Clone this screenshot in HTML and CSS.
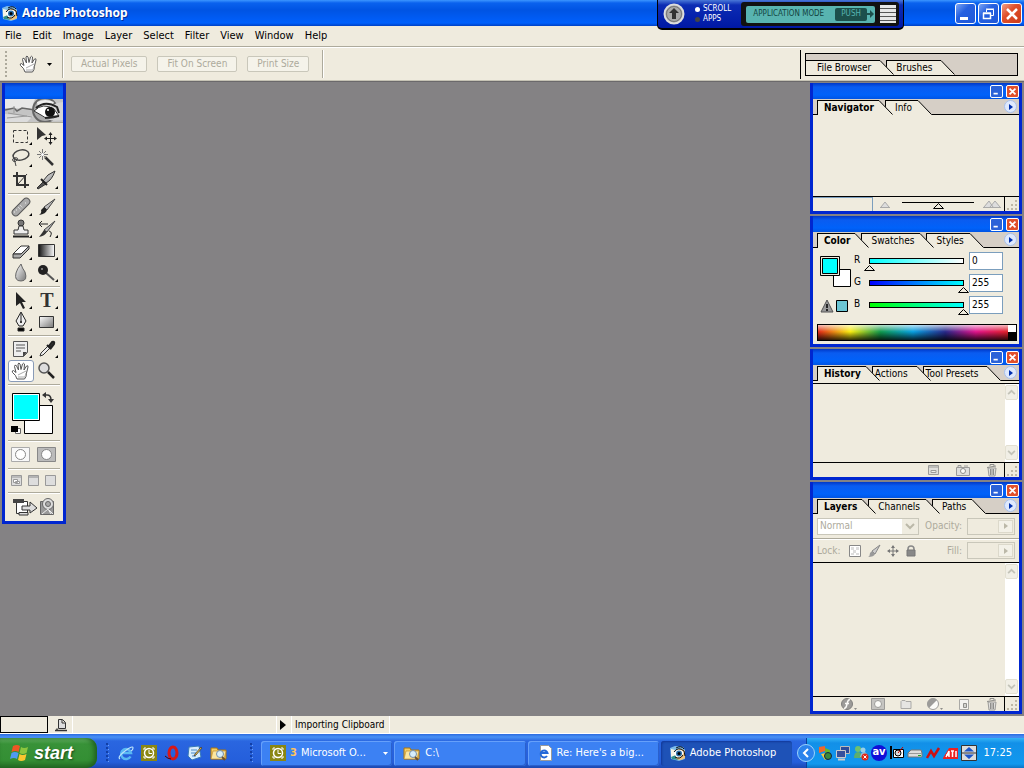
FILE: index.html
```html
<!DOCTYPE html>
<html lang="en">
<head>
    <meta charset="UTF-8">
    <meta name="viewport" content="width=device-width, initial-scale=1.0">
    <title>Adobe Photoshop</title>
    <link rel="stylesheet" href="styles.css">
</head>
<body>

<!-- shared icons -->
<svg class="defs" width="0" height="0" aria-hidden="true">
    <defs>
        <linearGradient id="metal" x1="0" y1="0" x2="1" y2="1">
            <stop offset="0" stop-color="#fff"/><stop offset="1" stop-color="#777"/>
        </linearGradient>
        <linearGradient id="dark" x1="0" y1="0" x2="1" y2="0">
            <stop offset="0" stop-color="#111"/><stop offset="1" stop-color="#fff"/>
        </linearGradient>
    </defs>
    <symbol id="i-slant" viewBox="0 0 14 15">
        <path class="slant-fill" d="M0 0L14 15H0z"/>
        <path d="M0 .5L13.500 14.500" fill="none" stroke="#000"/>
    </symbol>
    <symbol id="i-eye" viewBox="0 0 16 16">
        <path d="M0 3l5-2 8 1 2 3v9l-6 2-8-2z" fill="#7dbbe8"/>
        <path d="M1 4l4 1v9l-4-1z" fill="#f6f3e4"/>
        <path d="M1 12l5-2 3 5-7-1z" fill="#2f8f8a"/>
        <path d="M6 6q4-5 9 0v7q-6 4-9 0z" fill="#f0c47c"/>
        <path d="M4 8q4-6 10-1-3 7-8 5z" fill="#fff"/>
        <circle cx="9" cy="8.500" r="3" fill="#2a6ea8"/>
        <circle cx="9" cy="8.500" r="1.500" fill="#000"/>
        <path d="M4 7q4-6 10-1l1 5M5 12q5 3 8-2M6 3q5-3 8 1" fill="none" stroke="#111"/>
    </symbol>
    <symbol id="i-hand" viewBox="0 0 20 20">
        <path d="M6 18Q5 14 1.500 11.500q-1-2 1-2L5 11.500 3.500 5.500q0-2 1.800-1L7.500 9 7 3q.8-2 2 0l1 5.500L11.500 3q1.200-1.500 2 0L13 9l2.500-4q1.800-1 1.500 1l-1.500 6q0 4-2 6z" fill="#fff" stroke="#555"/>
        <path d="M7 16h7l1-4M7 14l8-4" stroke="#aaa" fill="none"/>
    </symbol>
    <symbol id="i-min" viewBox="0 0 13 13"><path d="M3 8h5v2H3z" fill="#fff"/></symbol>
    <symbol id="i-close" viewBox="0 0 13 13"><path d="M3 3l7 7M10 3l-7 7" stroke="#fff" stroke-width="2"/></symbol>
    <symbol id="i-up" viewBox="0 0 13 15"><path d="M2.500 9.500L6.500 5.500 10.500 9.500" fill="none" stroke="#c3c3b8" stroke-width="2"/></symbol>
    <symbol id="i-down" viewBox="0 0 13 15"><path d="M2.500 5.500L6.500 9.500 10.500 5.500" fill="none" stroke="#c3c3b8" stroke-width="2"/></symbol>
    <symbol id="i-trash" viewBox="0 0 14 14">
        <path d="M3 5l1 8h6l1-8z" fill="#ddd" stroke="#888"/>
        <path d="M2 4.500l9-1.500M5 3V1.500h4V3M5.500 6v6M7 6v6M8.500 6v6" fill="none" stroke="#777"/>
    </symbol>
    <symbol id="i-size" viewBox="0 0 14 14">
        <path d="M10 3h2v2h-2zM6 7h2v2H6zM10 7h2v2h-2zM2 11h2v2H2zM6 11h2v2H6zM10 11h2v2h-2z" fill="#bdb7a5"/>
    </symbol>
    <symbol id="i-folder" viewBox="0 0 18 16">
        <path d="M1 3h6l1 2h8v9H1z" fill="#f5ce62" stroke="#a87514"/>
        <path d="M3 6h13l-2 8H1z" fill="#fbe6a0" stroke="#b98427" stroke-width=".6"/>
        <circle cx="10" cy="9" r="3.500" fill="#d6eefb" stroke="#7890a8"/>
        <path d="M12 12l3 3" stroke="#6a5030" stroke-width="2"/>
    </symbol>
    <symbol id="i-outlook" viewBox="0 0 16 16">
        <path d="M0 0h16v16H0z" fill="#8a8612"/>
        <path d="M3 3h2M11 3h2M3 13h2M11 13h2M3 3v2M13 3v2M3 11v2M13 11v2" stroke="#fff"/>
        <circle cx="8" cy="8" r="4.500" fill="#8a8612" stroke="#fff" stroke-width="1.500"/>
        <path d="M8 5v3.500h3" fill="none" stroke="#fff"/>
    </symbol>
    <symbol id="i-ie" viewBox="0 0 16 16">
        <path d="M12.500 11.500A5 5 0 1 1 13 8H4" fill="none" stroke="#59b9f3" stroke-width="2.500"/>
        <path d="M2 14Q-1 12 7 6t8-3q0 2-2 3" fill="none" stroke="#b9e2fb" stroke-width="1.200"/>
    </symbol>
    <symbol id="i-grip" viewBox="0 0 6 22">
        <path d="M1 1h2v2H1zM1 5h2v2H1zM1 9h2v2H1zM1 13h2v2H1zM1 17h2v2H1z" fill="#123fa6"/>
        <path d="M3 3h1v1H3zM3 7h1v1H3zM3 11h1v1H3zM3 15h1v1H3zM3 19h1v1H3z" fill="#6fa1f5"/>
    </symbol>
</svg>

<header class="titlebar">
    <svg class="app-icon" width="16" height="16"><use href="#i-eye"/></svg>
    <h1>Adobe Photoshop</h1>
    <div class="window-buttons">
        <button aria-label="Minimize"><svg width="20" height="20"><path d="M4 13h8v3H4z" fill="#fff"/></svg></button>
        <button aria-label="Restore"><svg width="20" height="20"><path d="M7.500 8V5.500h7v6H12M7 5h8" fill="none" stroke="#fff"/><path d="M4.500 9.500h7v5h-7zM4 9h8" fill="none" stroke="#fff" stroke-width="1.500"/></svg></button>
        <button class="close" aria-label="Close"><svg width="20" height="20"><path d="M5 5l10 10M15 5L5 15" stroke="#fff" stroke-width="2.500"/></svg></button>
    </div>
    <div class="mode-widget">
        <button class="widget-up" aria-label="Up"><svg width="22" height="22"><circle cx="11" cy="11" r="9.500" fill="#999" stroke="#ddd" stroke-width="2"/><circle cx="11" cy="11" r="7.500" fill="#aaa" stroke="#777"/><path d="M11 5l5 5h-3v6H9v-6H6z" fill="#333"/></svg></button>
        <div class="widget-modes">
            <span class="mode on">SCROLL</span>
            <span class="mode">APPS</span>
        </div>
        <div class="widget-screen">
            <div class="lcd"><span>APPLICATION MODE</span><button>PUSH</button><svg width="7" height="8"><path d="M0 3h3V0l4 4-4 4V5H0z" fill="#1c504c"/></svg></div>
            <svg width="16" height="20"><path d="M0 1h16v18H0z" fill="#e6e6e6"/><path d="M0 4.500h16M0 8.500h16M0 12.500h16M0 16.500h16" stroke="#555"/></svg>
        </div>
    </div>
</header>

<nav class="menubar">
    <a href="#">File</a><a href="#">Edit</a><a href="#">Image</a><a href="#">Layer</a><a href="#">Select</a><a href="#">Filter</a><a href="#">View</a><a href="#">Window</a><a href="#">Help</a>
</nav>

<div class="options">
    <div class="grip"></div>
    <button class="tool-preset" aria-label="Hand tool">
        <svg width="20" height="20"><use href="#i-hand"/></svg>
        <svg width="5" height="3"><path d="M0 0h5L2.500 3z"/></svg>
    </button>
    <div class="rule"></div>
    <div class="option-buttons">
        <button disabled>Actual Pixels</button>
        <button disabled>Fit On Screen</button>
        <button disabled>Print Size</button>
    </div>
    <div class="rule"></div>
    <div class="well-area">
        <div class="well tabs">
            <button class="tab"><span>File Browser</span><svg width="14" height="15"><use href="#i-slant"/></svg></button>
            <button class="tab"><span>Brushes</span><svg width="14" height="15"><use href="#i-slant"/></svg></button>
        </div>
    </div>
</div>

<main class="workspace">
    <aside class="toolbox">
        <div class="toolbox-title"></div>
        <svg class="banner" viewBox="0 0 58 23" preserveAspectRatio="none">
            <path d="M0 0h58v23H0z" fill="#c4c4c4"/>
            <path d="M0 0h30q-4 8 0 10L0 9z" fill="#e8e8e8"/>
            <path d="M0 15l28 2-6 6H0z" fill="#dcdcdc"/>
            <path d="M0 11l9-2 3 3 5-3 13 2" fill="none" stroke="#666" stroke-width="1.500"/>
            <path d="M9 7v7M3 14l24 4M2 19l20-2" stroke="#999"/>
            <circle cx="40" cy="11" r="12" fill="#aaa" stroke="#666" stroke-width="2"/>
            <path d="M32 3q8-4 17 0l-3 5q-8-3-13 2z" fill="#eee"/>
            <path d="M58 3q-13 1-16 11t16 7z" fill="#d5d5d5"/>
            <path d="M29 12Q38 3 49 10l5 7q-11 5-18-1z" fill="#fff" stroke="#333"/>
            <circle cx="45" cy="13" r="5" fill="#111"/>
            <path d="M31 9Q40 1 52 8l2 6M40 19l14-2" fill="none" stroke="#222" stroke-width="2"/>
            <circle cx="43" cy="11" r="1" fill="#fff"/>
        </svg>
        <div class="tool-group">
            <button class="more" aria-label="Marquee"><svg viewBox="0 0 24 22"><path d="M4.500 5.500h14v12h-14z" fill="none" stroke="#333" stroke-dasharray="3 2"/></svg></button>
            <button aria-label="Move"><svg viewBox="0 0 24 22"><path d="M2 2l9 8-4 1-5 4z" fill="#333"/><path d="M15.500 8v11M10 13.500h11" stroke="#222"/><path d="M15.500 7l2 3h-4zM15.500 20l2-3h-4zM9 13.500l3-2v4zM22 13.500l-3-2v4z" fill="#222"/></svg></button>
            <button class="more" aria-label="Lasso"><svg viewBox="0 0 24 22"><ellipse cx="12" cy="8" rx="8" ry="5" transform="rotate(-12 12 8)" fill="none" stroke="#444" stroke-width="1.500"/><path d="M6 11q-4 1-2 3t4-1-3-2q1 4 2 8" fill="none" stroke="#444"/></svg></button>
            <button aria-label="Magic wand"><svg viewBox="0 0 24 22"><path d="M10 10l8 8" stroke="#333" stroke-width="2.500"/><path d="M7.500 2v11M2 7.500h11M4 4l7 7M11 4l-7 7" stroke="#777"/><circle cx="7.500" cy="7.500" r="1.500" fill="#fff"/></svg></button>
            <button aria-label="Crop"><svg viewBox="0 0 24 22"><path d="M8 3v13h12M4 7h12v12" fill="none" stroke="#333" stroke-width="2"/><path d="M9 15l9-10" stroke="#333"/></svg></button>
            <button class="more" aria-label="Slice"><svg viewBox="0 0 24 22"><path d="M20 2q-8 3-12 10l3 2q6-3 9-12z" fill="url(#metal)" stroke="#333"/><path d="M8 13l3 2-8 5-1-1z" fill="#555" stroke="#333"/><path d="M6 10l6 6" stroke="#222" stroke-width="2"/></svg></button>
        </div>
        <div class="tool-group">
            <button class="more" aria-label="Healing brush"><svg viewBox="0 0 24 22"><rect x="1" y="7.500" width="22" height="7" rx="3.500" transform="rotate(-45 12 11)" fill="#aaa" stroke="#555"/><path d="M9 11l3 3M11 9l3 3M7 14h1M16 7h1M5 16h1" stroke="#eee" stroke-dasharray="1 1"/></svg></button>
            <button class="more" aria-label="Brush"><svg viewBox="0 0 24 22"><path d="M20 3L9 11l3 3z" fill="url(#metal)" stroke="#444"/><path d="M9 11l3 3q-1 4-8 5 3-2 2-5z" fill="#222"/></svg></button>
            <button class="more" aria-label="Clone stamp"><svg viewBox="0 0 24 22"><circle cx="12" cy="5" r="3" fill="#777" stroke="#333"/><path d="M10 8h4l1 4h4v4H5v-4h4z" fill="#eee" stroke="#333"/><path d="M4 18.500h16" stroke="#222" stroke-width="2"/></svg></button>
            <button class="more" aria-label="History brush"><svg viewBox="0 0 24 22"><path d="M20 3L9 12l3 2z" fill="url(#metal)" stroke="#444"/><path d="M9 12l3 2q-2 4-8 5l3-4z" fill="#333"/><path d="M4 6h9M4 6l3-3M4 6l3 3M14 13q4 1 1 6" fill="none" stroke="#222"/></svg></button>
            <button class="more" aria-label="Eraser"><svg viewBox="0 0 24 22"><path d="M4 14l8-8h8l-8 8z" fill="#fff" stroke="#333"/><path d="M4 14v4h7l9-9V6l-8 8z" fill="#aaa" stroke="#333"/></svg></button>
            <button class="more" aria-label="Gradient"><svg viewBox="0 0 24 22"><path d="M3.500 4.500h16v12h-16z" fill="url(#dark)" stroke="#333"/></svg></button>
            <button class="more" aria-label="Blur"><svg viewBox="0 0 24 22"><path d="M12 2q1 4 4 8 3 9-4 9t-5-8q1-4 5-9z" fill="url(#metal)" stroke="#666"/></svg></button>
            <button class="more" aria-label="Burn"><svg viewBox="0 0 24 22"><path d="M10 10l9 8" stroke="#555" stroke-width="2"/><circle cx="8" cy="8" r="5" fill="#222"/><circle cx="7" cy="7" r="1" fill="#999"/></svg></button>
        </div>
        <div class="tool-group">
            <button class="more" aria-label="Path selection"><svg viewBox="0 0 24 22"><path d="M7 3v14l4-3 3 6 2-1-3-6h4z" fill="#222"/></svg></button>
            <button class="more type-tool" aria-label="Type">T</button>
            <button class="more" aria-label="Pen"><svg viewBox="0 0 24 22"><path d="M12 1l5 9-3 5h-4l-3-5z" fill="#eee" stroke="#222"/><path d="M12 2v8M9 17h6v3H9z" stroke="#222"/><circle cx="12" cy="11" r="1"/></svg></button>
            <button class="more" aria-label="Rectangle"><svg viewBox="0 0 24 22"><path d="M4.500 5.500h14v11h-14z" fill="url(#metal)" stroke="#333"/></svg></button>
        </div>
        <div class="tool-group">
            <button class="more" aria-label="Notes"><svg viewBox="0 0 24 22"><path d="M4.500 3.500h14v11l-4 4h-10z" fill="#eee" stroke="#555"/><path d="M7 7h9M7 10h9M7 13h5" stroke="#555"/><path d="M18 14h-4v5z" fill="#444"/></svg></button>
            <button class="more" aria-label="Eyedropper"><svg viewBox="0 0 24 22"><path d="M5 18l1-3 7-7 2 2-7 7z" fill="#eee" stroke="#333"/><path d="M12 7l4 4M14 8l3-4q3-1 2 2l-3 4z" stroke="#222" stroke-width="2" fill="#333"/></svg></button>
            <button class="selected" aria-label="Hand"><svg viewBox="0 0 20 20"><use href="#i-hand"/></svg></button>
            <button aria-label="Zoom"><svg viewBox="0 0 24 22"><circle cx="9" cy="8" r="5" fill="#ddd" stroke="#555" stroke-width="1.500"/><path d="M13 12l6 6" stroke="#222" stroke-width="2.500"/></svg></button>
        </div>
        <div class="tool-group colors">
            <button aria-label="Foreground and background colors">
                <svg width="46" height="46" viewBox="0 0 46 46">
                    <path d="M15.500 15.500h28v28h-28z" fill="#fff" stroke="#000"/>
                    <path d="M3.500 3.500h27v27h-27z" fill="#fff" stroke="#000"/><path d="M5 5h24v24H5z" fill="#0ff"/>
                    <path d="M36 5h2q4 0 4 5" fill="none" stroke="#333" stroke-width="1.500"/><path d="M33 5l4-3v6zM39 9h6l-3 4z" fill="#333"/>
                    <path d="M6.500 38.500h5v5h-5z" fill="#fff" stroke="#666"/><path d="M2 36h7v6H2z"/>
                </svg>
            </button>
        </div>
        <div class="tool-group masks">
            <button aria-label="Standard mode"><svg width="20" height="16"><path d="M.5.500h18v14H.5z" fill="#f8f8f8" stroke="#aaa"/><circle cx="9.500" cy="7.500" r="5" fill="#fff" stroke="#888"/></svg></button>
            <button aria-label="Quick mask mode"><svg width="20" height="16"><path d="M.5.500h18v14H.5z" fill="#bbb" stroke="#888"/><circle cx="9.500" cy="7.500" r="5" fill="#fff" stroke="#888"/></svg></button>
        </div>
        <div class="tool-group screens">
            <button aria-label="Standard screen"><svg width="12" height="12"><path d="M.5.500h10v10H.5z" fill="#ddd" stroke="#999"/><path d="M1 2h9" stroke="#999"/><path d="M2.500 4.500h4v3h-4zM4.500 6.500h4v2h-4z" fill="#fff" stroke="#999"/></svg></button>
            <button aria-label="Full screen with menu"><svg width="12" height="12"><path d="M.5.500h10v10H.5z" fill="#ddd" stroke="#999"/><path d="M1 2h9" stroke="#888"/></svg></button>
            <button aria-label="Full screen"><svg width="12" height="12"><path d="M.5.500h10v10H.5z" fill="#ddd" stroke="#999"/></svg></button>
        </div>
        <div class="tool-group jump">
            <button aria-label="Jump to ImageReady">
                <svg width="46" height="20" viewBox="0 0 46 20">
                    <path d="M5.500 4.500h11v12h-11z" fill="#fff" stroke="#333"/><path d="M2 2h11v4H2z" fill="#444"/>
                    <path d="M8 15.500h9V18H8zM11 9h8V5l7 6-7 5v-3h-8z" fill="#ddd" stroke="#333"/>
                    <path d="M29.500 4.500h13v13h-13z" fill="#999" stroke="#666"/><circle cx="37" cy="7" r="5.500" fill="#ddd" stroke="#666"/><circle cx="37" cy="7" r="2.500" fill="#aaa" stroke="#666"/><path d="M31 17l6-5 3 5M38 13l4 4" stroke="#eee" fill="none"/>
                </svg>
            </button>
        </div>
    </aside>

    <div class="palettes">
        <section class="palette">
            <div class="palette-title"><button aria-label="Minimize"><svg width="11" height="11" viewBox="0 0 13 13"><use href="#i-min"/></svg></button><button class="close" aria-label="Close"><svg width="11" height="11" viewBox="0 0 13 13"><use href="#i-close"/></svg></button></div>
            <div class="tabs">
                <button class="tab active"><span>Navigator</span><svg width="14" height="15"><use href="#i-slant"/></svg></button>
                <button class="tab"><span>Info</span><svg width="14" height="15"><use href="#i-slant"/></svg></button>
                <button class="flyout" aria-label="Navigator menu"></button>
            </div>
            <div class="palette-body"></div>
            <footer class="nav-footer">
                <input class="nav-zoom" type="text" aria-label="Zoom level">
                <svg width="10" height="8"><path d="M0 7.500h10M1 7l4-5 4 5" fill="#ddd" stroke="#aaa"/></svg>
                <input class="nav-range" type="range" aria-label="Zoom" value="50">
                <svg width="18" height="8"><path d="M0 7.500h18M1 7l5-6 4 6M7 7l5-6 5 6" fill="#ddd" stroke="#aaa"/></svg>
                <div class="size-grip"><svg width="14" height="14"><use href="#i-size"/></svg></div>
            </footer>
        </section>

        <section class="palette">
            <div class="palette-title"><button aria-label="Minimize"><svg width="11" height="11" viewBox="0 0 13 13"><use href="#i-min"/></svg></button><button class="close" aria-label="Close"><svg width="11" height="11" viewBox="0 0 13 13"><use href="#i-close"/></svg></button></div>
            <div class="tabs">
                <button class="tab active"><span>Color</span><svg width="14" height="15"><use href="#i-slant"/></svg></button>
                <button class="tab"><span>Swatches</span><svg width="14" height="15"><use href="#i-slant"/></svg></button>
                <button class="tab"><span>Styles</span><svg width="14" height="15"><use href="#i-slant"/></svg></button>
                <button class="flyout" aria-label="Color menu"></button>
            </div>
            <div class="palette-body color-body">
                <div class="color-mixer">
                    <div class="color-side">
                        <svg width="32" height="32"><path d="M13.500 13.500h17v17h-17z" fill="#fff" stroke="#000"/><path d="M.5.500h19v19H.5z" fill="#efebde" stroke="#000"/><path d="M2.500 2.500h15v15h-15z" fill="#0ff" stroke="#000"/></svg>
                        <svg width="29" height="14"><path d="M7 1l6 12H1z" fill="#999" stroke="#555"/><path d="M7 5v4M7 10v2" stroke="#000" stroke-width="1.500"/><path d="M16.500 1.500h11v11h-11z" fill="#6cc6d4" stroke="#000"/></svg>
                    </div>
                    <div class="channels">
                        <label for="red">R</label><input id="red" class="channel red" type="range" min="0" max="255" value="0"><input type="text" value="0" aria-label="Red value">
                        <label for="green">G</label><input id="green" class="channel green" type="range" min="0" max="255" value="255"><input type="text" value="255" aria-label="Green value">
                        <label for="blue">B</label><input id="blue" class="channel blue" type="range" min="0" max="255" value="255"><input type="text" value="255" aria-label="Blue value">
                    </div>
                </div>
                <div class="spectrum"><div class="ramp"></div><div class="ends"></div></div>
            </div>
        </section>

        <section class="palette">
            <div class="palette-title"><button aria-label="Minimize"><svg width="11" height="11" viewBox="0 0 13 13"><use href="#i-min"/></svg></button><button class="close" aria-label="Close"><svg width="11" height="11" viewBox="0 0 13 13"><use href="#i-close"/></svg></button></div>
            <div class="tabs">
                <button class="tab active"><span>History</span><svg width="14" height="15"><use href="#i-slant"/></svg></button>
                <button class="tab tight"><span>Actions</span><svg width="14" height="15"><use href="#i-slant"/></svg></button>
                <button class="tab tight"><span>Tool Presets</span><svg width="14" height="15"><use href="#i-slant"/></svg></button>
                <button class="flyout" aria-label="History menu"></button>
            </div>
            <div class="palette-body list-body">
                <div class="scrollbar"><button aria-label="Scroll up"><svg width="11" height="13" viewBox="0 0 13 15"><use href="#i-up"/></svg></button><button aria-label="Scroll down"><svg width="11" height="13" viewBox="0 0 13 15"><use href="#i-down"/></svg></button></div>
            </div>
            <footer class="icon-footer">
                <button aria-label="New document"><svg width="14" height="14"><path d="M1.500 2.500h10v9h-10z" fill="#ddd" stroke="#888"/><path d="M2 4h9M4 7.500h5v2H4z" stroke="#888" fill="#eee"/></svg></button>
                <button aria-label="New snapshot"><svg width="16" height="14"><path d="M1.500 4.500h13v8h-13zM3 4V2.500h3V4" fill="#ddd" stroke="#888"/><circle cx="8" cy="8" r="2.500" fill="#fff" stroke="#777"/><path d="M9 3h4" stroke="#888"/></svg></button>
                <button aria-label="Delete"><svg width="14" height="14"><use href="#i-trash"/></svg></button>
                <div class="size-grip"><svg width="14" height="14"><use href="#i-size"/></svg></div>
            </footer>
        </section>

        <section class="palette layers">
            <div class="palette-title"><button aria-label="Minimize"><svg width="11" height="11" viewBox="0 0 13 13"><use href="#i-min"/></svg></button><button class="close" aria-label="Close"><svg width="11" height="11" viewBox="0 0 13 13"><use href="#i-close"/></svg></button></div>
            <div class="tabs">
                <button class="tab active"><span>Layers</span><svg width="14" height="15"><use href="#i-slant"/></svg></button>
                <button class="tab"><span>Channels</span><svg width="14" height="15"><use href="#i-slant"/></svg></button>
                <button class="tab"><span>Paths</span><svg width="14" height="15"><use href="#i-slant"/></svg></button>
                <button class="flyout" aria-label="Layers menu"></button>
            </div>
            <div class="layer-row">
                <select class="blend" aria-label="Blend mode" disabled><option>Normal</option></select>
                <label for="opacity">Opacity:</label>
                <div class="spin"><input id="opacity" type="text" disabled><button disabled aria-label="Opacity slider"></button></div>
            </div>
            <div class="layer-row">
                <span class="lock-label">Lock:</span>
                <div class="locks">
                    <button aria-label="Lock transparency"><svg width="12" height="12"><path d="M.5.500h11v11H.5z" fill="#fff" stroke="#888"/><path d="M2 2h3v3H2zM7 2h3v3H7zM4 5h3v3H4zM2 8h3v2H2zM7 8h3v2H7z" fill="#ddd"/></svg></button>
                    <button aria-label="Lock pixels"><svg width="14" height="14"><path d="M13 1L5 7l3 3z" fill="#ccc" stroke="#888"/><path d="M5 7l3 3q-1 3-7 3 2-1 2-4z" fill="#999"/></svg></button>
                    <button aria-label="Lock position"><svg width="12" height="12"><path d="M6 1v10M1 6h10" stroke="#777"/><path d="M6 0l2 3H4zM6 12l2-3H4zM0 6l3-2v4zM12 6L9 4v4z" fill="#777"/></svg></button>
                    <button aria-label="Lock all"><svg width="12" height="12"><path d="M3 6V4q0-3 3-3t3 3v2" fill="none" stroke="#888" stroke-width="1.500"/><path d="M2 5h8v6H2z" fill="#888" stroke="#777"/></svg></button>
                </div>
                <label for="fill">Fill:</label>
                <div class="spin"><input id="fill" type="text" disabled><button disabled aria-label="Fill slider"></button></div>
            </div>
            <div class="palette-body list-body">
                <div class="scrollbar"><button aria-label="Scroll up"><svg width="11" height="13" viewBox="0 0 13 15"><use href="#i-up"/></svg></button><button aria-label="Scroll down"><svg width="11" height="13" viewBox="0 0 13 15"><use href="#i-down"/></svg></button></div>
            </div>
            <footer class="icon-footer">
                <button aria-label="Layer style"><svg width="16" height="14"><circle cx="6" cy="7" r="5.500" fill="#888" stroke="#666"/><path d="M9 3q-2-1-3 4t-3 4M4 6.500h4" fill="none" stroke="#fff" stroke-width="1.500"/><path d="M13 11h3l-1.500 2z" fill="#777"/></svg></button>
                <button aria-label="Layer mask"><svg width="14" height="14"><path d="M.5 1.500h13v11H.5z" fill="#bbb" stroke="#888"/><circle cx="7" cy="7" r="3.500" fill="#fff" stroke="#888"/></svg></button>
                <button aria-label="New set"><svg width="14" height="14"><path d="M2 4.500l1-1h3l1 1h5v7H2z" fill="#e4e4e4" stroke="#999"/></svg></button>
                <button aria-label="Adjustment layer"><svg width="16" height="14"><circle cx="6" cy="7" r="5.500" fill="#fff" stroke="#888"/><path d="M2 11A5.500 5.500 0 0 1 10 3z" fill="#888"/><path d="M13 11h3l-1.500 2z" fill="#777"/></svg></button>
                <button aria-label="New layer"><svg width="14" height="14"><path d="M2.500 2.500h9v10h-9z" fill="#f4f4f4" stroke="#999"/><path d="M6.500 6.500h3v4h-3z" fill="#ccc" stroke="#777"/></svg></button>
                <button aria-label="Delete"><svg width="14" height="14"><use href="#i-trash"/></svg></button>
                <div class="size-grip"><svg width="14" height="14"><use href="#i-size"/></svg></div>
            </footer>
        </section>
    </div>
</main>

<div class="statusbar">
    <input class="doc-zoom" type="text" aria-label="Document zoom">
    <div class="status-cell doc"><svg width="14" height="14"><path d="M4.500 1.500h4l3 3v6h-7zM8 2v3h3" fill="#ddd" stroke="#333"/><path d="M1 12.500h12M3 10.500v2" stroke="#333" stroke-width="1.500"/></svg></div>
    <div class="status-cell info"></div>
    <button class="status-arrow" aria-label="Status options"><svg width="6" height="10"><path d="M0 0l6 5-6 5z"/></svg></button>
    <div class="status-cell message">Importing Clipboard</div>
</div>

<footer class="taskbar">
    <button class="start">
        <svg width="20" height="20"><path d="M3 3q4-2 7 0L8.500 9q-3-2-7 0z" fill="#ee5624"/><path d="M11 4q3 2 7 0l-1.500 6q-4 2-7 0z" fill="#8cc63e"/><path d="M1.500 10q3-2 7 0L7 16q-3-2-7 0z" fill="#4f9af2"/><path d="M9.500 11q3 2 7 0L15 17q-4 2-7 0z" fill="#fbc62f"/></svg>
        start
    </button>
    <div class="quick">
        <svg width="6" height="22"><use href="#i-grip"/></svg>
        <a href="#" aria-label="Internet Explorer"><svg width="16" height="16"><use href="#i-ie"/></svg></a>
        <a href="#" aria-label="Outlook"><svg width="16" height="16"><use href="#i-outlook"/></svg></a>
        <a href="#" aria-label="Opera"><svg width="16" height="16"><ellipse cx="9" cy="8" rx="4" ry="6" fill="none" stroke="#d81818" stroke-width="3"/><path d="M1 11q3 3 6 3" stroke="#500" fill="none"/></svg></a>
        <a href="#" aria-label="Show desktop"><svg width="16" height="16"><path d="M2 2l10-1 2 11-9 3-4-4z" fill="#d8eefc" stroke="#387ab8"/><path d="M4 5h6M4 8h5M5 11h4" stroke="#4a8ac8"/><path d="M14 2L8 9l-1 2 2-1 6-7z" fill="#f0c040" stroke="#333" stroke-width=".7"/></svg></a>
        <a href="#" aria-label="Explorer"><svg width="18" height="16"><use href="#i-folder"/></svg></a>
    </div>
    <svg width="6" height="22"><use href="#i-grip"/></svg>
    <div class="tasks">
        <button><svg width="16" height="16"><use href="#i-outlook"/></svg><b>3</b><span>Microsoft O...</span><svg class="caret" width="5" height="3"><path d="M0 0h5L2.500 3z" fill="#fff"/></svg></button>
        <button><svg width="18" height="16"><use href="#i-folder"/></svg><span>C:\</span></button>
        <button><svg width="16" height="16"><path d="M3.500.500h8l3 3v12h-11z" fill="#fff" stroke="#9a9a9a"/><path d="M10 11A3.500 3.500 0 1 1 10.500 8H3" fill="none" stroke="#2468d8" stroke-width="2"/></svg><span>Re: Here's a big...</span></button>
        <button class="current"><svg width="16" height="16"><use href="#i-eye"/></svg><span>Adobe Photoshop</span></button>
    </div>
    <div class="tray">
        <button class="tray-toggle" aria-label="Show hidden icons"><svg width="18" height="18"><circle cx="9" cy="9" r="8.500" fill="#2b83ec" stroke="#9dd3fb"/><path d="M11 5L7 9l4 4" fill="none" stroke="#fff" stroke-width="2"/></svg></button>
        <div class="tray-icons">
            <svg width="16" height="16"><path d="M2 2l6-1v5l-6 2z" fill="#f0682c"/><path d="M8 3l5 2v5L8 8z" fill="#67b52e"/><path d="M4 9l5-1 4 3-5 4z" fill="#f7cf3a"/><circle cx="11" cy="11" r="3.500" fill="#3a8a3a" stroke="#124"/></svg>
            <svg width="16" height="16"><path d="M5.500 1.500h9v7h-9z" fill="#2b4b9b" stroke="#bbb"/><path d="M1.500 5.500h9v7h-9z" fill="#36509c" stroke="#ccc"/><path d="M3 14.500h7" stroke="#ccc" stroke-width="2"/></svg>
            <svg width="16" height="16"><circle cx="5" cy="4" r="3" fill="#6ec06e"/><path d="M1 13q0-6 4-6t5 6z" fill="#5cae6c"/><circle cx="10" cy="5" r="2.500" fill="#9ad0e8"/><path d="M7 12q1-5 4-5t3 4z" fill="#8fc0dd"/><circle cx="12" cy="12" r="3.500" fill="#e02818"/><path d="M10.500 10.500l3 3M13.500 10.500l-3 3" stroke="#fff"/></svg>
            <span class="av">av</span>
            <svg width="16" height="16"><path d="M4.500 4.500h10v8h-10z" fill="#fff" stroke="#000"/><path d="M2 1v13" stroke="#000" stroke-width="2"/><circle cx="9" cy="8" r="3" fill="#ddd" stroke="#000"/><path d="M9 8l5-6" stroke="#c00"/></svg>
            <svg width="16" height="16"><path d="M1 8l3-3h10l1 3v4H1z" fill="#ddd" stroke="#777"/><path d="M1 8.500h14" stroke="#999"/><path d="M11 10.500h3" stroke="#2a2"/></svg>
            <svg width="16" height="16"><path d="M2 13L6 6l3 5 5-8" fill="none" stroke="#c11" stroke-width="2.500"/></svg>
            <svg width="16" height="16"><path d="M0 13L6 3h9v11H0z" fill="#e22"/><path d="M3 12l3-6v6M3 10h3M8 6h3M9.500 6v6M13 6v6" fill="none" stroke="#fff" stroke-width="1.500"/></svg>
            <svg width="16" height="16"><path d="M.5.500h15v15H.5z" fill="#ddd" stroke="#333"/><path d="M3 6.500L8 2l5 4.500zM3 9.500L8 14l5-4.500z" fill="#1c54c8"/><path d="M0 8h16" stroke="#333"/></svg>
        </div>
        <time>17:25</time>
    </div>
</footer>

</body>
</html>
```

FILE: styles.css
```css
* {
    box-sizing: border-box;
}
body {
    margin: 0;
    height: 100vh;
    display: flex;
    flex-direction: column;
    overflow: hidden;
    font-family: "DejaVu Sans Condensed", "Noto Sans", sans-serif;
    font-size: 11px;
    line-height: 14px;
    color: #000;
    background: #848284;
}
button, input, select {
    font: inherit;
    color: inherit;
    margin: 0;
    padding: 0;
    border: 0;
    border-radius: 0;
    background: none;
}
a {
    color: inherit;
    text-decoration: none;
}
svg {
    display: block;
    flex: none;
}
.defs {
    position: absolute;
}

/* title bar */
.titlebar {
    position: relative;
    display: flex;
    align-items: center;
    height: 26px;
    padding: 0 2px;
    background: linear-gradient(#3c96ff 0, #0a62ee 3px, #0054e3 10px, #005cf5 19px, #0060fc 23px, #0041c4);
}
.titlebar h1 {
    flex: 1;
    margin: 0 4px;
    font-family: "Noto Sans", sans-serif;
    font-size: 12px;
    font-weight: bold;
    color: #fff;
    text-shadow: 1px 1px #00309c;
}
.window-buttons {
    display: flex;
    gap: 2px;
}
.window-buttons button {
    width: 21px;
    height: 21px;
    border: 1px solid #fff;
    border-radius: 3px;
    background: linear-gradient(135deg, #7ba5f5, #2560e0 40%, #2058d8);
}
.window-buttons .close {
    background: linear-gradient(135deg, #f0a088, #e0502c 40%, #cc3c18);
}
.mode-widget {
    position: absolute;
    z-index: 2;
    left: 657px;
    top: 0;
    width: 247px;
    height: 30px;
    padding: 2px 8px 2px 5px;
    display: flex;
    align-items: center;
    gap: 10px;
    border: solid #000;
    border-width: 0 1px 2px;
    border-radius: 0 0 5px 5px;
    background: linear-gradient(#4a78d8, #0c2cb4 5px, #0018a4);
    font-size: 8px;
    line-height: 10px;
}
.widget-modes {
    flex: 1;
    color: #fff;
}
.mode {
    display: flex;
    align-items: center;
    gap: 3px;
}
.mode::before {
    content: "";
    width: 5px;
    height: 5px;
    border-radius: 50%;
    background: #444;
}
.mode.on::before {
    background: #fff;
}
.widget-screen {
    display: flex;
    align-items: center;
    gap: 5px;
    height: 24px;
    padding: 0 3px 0 5px;
    border-radius: 3px;
    background: #111;
}
.lcd {
    display: flex;
    align-items: center;
    height: 17px;
    padding: 0 1px 0 7px;
    border-radius: 2px;
    background: #58b4b0;
    color: #134440;
}
.lcd span {
    width: 82px;
    white-space: nowrap;
}
.lcd button {
    height: 13px;
    padding: 0 6px;
    border-radius: 2px;
    background: #1c504c;
    color: #58b4b0;
}

/* menu and tool options */
.menubar {
    display: flex;
    gap: 11px;
    height: 21px;
    padding: 3px 5px;
    background: #efebde;
    border-bottom: 1px solid #adaa9c;
}
.options {
    display: flex;
    align-items: center;
    height: 34px;
    padding-left: 5px;
    background: #efebde;
    border-top: 1px solid #fff;
    border-bottom: 1px solid #c6c3b5;
}
.grip {
    width: 2px;
    height: 26px;
    background: repeating-linear-gradient(#adaa9c 0 2px, transparent 2px 4px);
}
.tool-preset {
    display: flex;
    align-items: center;
    gap: 8px;
    padding: 0 10px 0 12px;
}
.rule {
    width: 2px;
    height: 28px;
    border-left: 1px solid #adaa9c;
    border-right: 1px solid #fff;
}
.option-buttons {
    display: flex;
    gap: 10px;
    padding: 0 13px 0 7px;
    color: #adaa9c;
}
.option-buttons button {
    height: 16px;
    padding: 0 9px;
    border: 1px solid #c9c7ba;
    border-radius: 2px;
    background: #f5f3ea;
    font-size: 10px;
    line-height: 14px;
}
.well-area {
    margin-left: auto;
    padding: 3px 6px 3px 4px;
    border-left: 1px solid #000;
}
.well.tabs {
    width: 213px;
    height: 23px;
    padding: 6px 0 0;
    border: 1px solid #000;
}

/* tabs */
.tabs {
    display: flex;
    align-items: flex-start;
    height: 16px;
    padding: 1px 2px 0 4px;
    background: #d6cfc6;
    border-bottom: 1px solid #000;
    font-size: 10px;
}
.tab {
    position: relative;
    z-index: 2;
    display: flex;
    height: 15px;
    white-space: nowrap;
}
.tab + .tab {
    z-index: 1;
    margin-left: -8px;
}
.tab + .tab + .tab {
    z-index: 0;
}
.tab span {
    height: 15px;
    padding: 0 6px 0 9px;
    border: solid #000;
    border-width: 1px 0 0 1px;
    background: #efebde;
}
.tab.active span {
    padding: 0 5px 0 6px;
    font-weight: bold;
}
.tab.tight span {
    padding: 0 9px 0 2px;
}
.tab.active {
    z-index: 3;
    height: 15px;
    margin-bottom: -1px;
}
.well .tab span {
    padding: 0 9px 0 9px;
}
.well .tab:first-child span {
    padding-left: 11px;
    border-left: 0;
}
.slant-fill {
    fill: #efebde;
}
.flyout {
    width: 13px;
    height: 13px;
    margin-left: auto;
    border: 1px solid #a8c0ec;
    border-radius: 50%;
    background: #dfe9fc;
    display: flex;
    align-items: center;
    justify-content: center;
}
.flyout::before {
    content: "";
    border: 3px solid transparent;
    border-left: 4px solid #0030b0;
    border-right: 0;
}

/* workspace */
.workspace {
    flex: 1;
    min-height: 0;
    display: flex;
    justify-content: space-between;
    align-items: flex-start;
    padding: 1px 2px;
    border-top: 1px solid #6b696b;
}
.toolbox, .palette {
    border: 3px solid #0026d0;
    border-top: 0;
    background: #efebde;
}
.toolbox {
    width: 64px;
}
.toolbox-title, .palette-title {
    height: 16px;
    background: linear-gradient(#0038c8, #0a5cf0 4px, #0062fa 12px, #0054e4);
}
.banner {
    width: 100%;
    height: 24px;
    border-bottom: 1px solid #adaa9c;
}
.tool-group {
    display: grid;
    grid-template-columns: 1fr 1fr;
    margin: 0 3px;
    padding: 2px 0;
    border-bottom: 1px solid #adaa9c;
    box-shadow: 0 1px #fff;
}
.tool-group:last-child {
    border-bottom: 0;
    box-shadow: none;
}
.tool-group button {
    position: relative;
    display: flex;
    align-items: center;
    justify-content: center;
    height: 22px;
}
.tool-group button svg {
    width: 24px;
    height: 22px;
}
.tool-group .more::after {
    content: "";
    position: absolute;
    right: 2px;
    bottom: 2px;
    border-left: 3px solid transparent;
    border-bottom: 3px solid #000;
}
.tool-group .selected {
    border: 1px solid #8a9cb8;
    border-radius: 3px;
    background: #fff;
}
.tool-group .selected svg {
    width: 20px;
    height: 20px;
}
.tool-group .type-tool {
    font-family: "Liberation Serif", serif;
    font-size: 20px;
    font-weight: bold;
    color: #333;
}
.tool-group.colors {
    display: block;
    padding: 4px 1px;
}
.tool-group.colors button {
    height: 47px;
}
.tool-group.colors svg {
    width: 46px;
    height: 46px;
}
.tool-group.masks {
    padding: 3px 0 2px;
}
.tool-group.masks svg {
    width: 20px;
    height: 16px;
}
.tool-group.screens {
    display: flex;
    gap: 5px;
    padding: 2px 3px;
}
.tool-group.screens button {
    height: 19px;
}
.tool-group.screens svg {
    width: 12px;
    height: 12px;
}
.tool-group.jump {
    display: block;
    padding: 3px;
}
.tool-group.jump svg {
    width: 46px;
    height: 20px;
}

/* palettes */
.palettes {
    display: flex;
    flex-direction: column;
    gap: 2px;
    width: 212px;
    height: 100%;
}
.palette {
    display: flex;
    flex-direction: column;
    height: 131px;
}
.palette.layers {
    height: 232px;
}
.palette-title {
    flex: none;
    display: flex;
    justify-content: flex-end;
    align-items: center;
    gap: 3px;
}
.palette-title button {
    width: 13px;
    height: 13px;
    border: 1px solid #fff;
    border-radius: 2px;
    background: #2b62d8;
}
.palette-title .close {
    background: #e0502c;
}
.palette .tabs {
    flex: none;
}
.palette-body {
    flex: 1;
    min-height: 0;
}
.palette footer {
    display: flex;
    align-items: center;
    height: 15px;
    border-top: 1px solid #000;
}
.size-grip {
    width: 15px;
    height: 14px;
    border-left: 1px solid #000;
}
.nav-zoom {
    width: 60px;
    height: 14px;
    margin-right: 7px;
    border: 1px solid #7b9ebd;
    border-left: 0;
    border-bottom: 0;
}
.nav-range {
    -webkit-appearance: none;
    appearance: none;
    flex: 1;
    min-width: 0;
    height: 8px;
    margin: 0 9px 0 12px;
    background: linear-gradient(#000, #000) 0 2px / 100% 1px no-repeat;
}
.nav-footer .size-grip {
    margin-left: 3px;
}
input[type="range"]::-webkit-slider-thumb {
    -webkit-appearance: none;
    width: 11px;
    height: 6px;
    margin-top: 3px;
    background: url("data:image/svg+xml,%3Csvg xmlns='http://www.w3.org/2000/svg' width='11' height='6'%3E%3Cpath d='M.5 5.500h10L5.500 .5z' fill='%23efebde' stroke='%23000'/%3E%3C/svg%3E") no-repeat;
}

/* color palette */
.color-body {
    display: flex;
    flex-direction: column;
    padding: 4px 2px 3px 4px;
}
.color-mixer {
    flex: 1;
    display: flex;
    gap: 2px;
}
.color-side {
    width: 35px;
    padding: 4px 0 0 3px;
    display: flex;
    flex-direction: column;
    gap: 11px;
}
.channels {
    flex: 1;
    display: grid;
    grid-template-columns: 10px 1fr 34px;
    grid-auto-rows: 18px;
    row-gap: 4px;
    padding-right: 14px;
    font-size: 10px;
}
.channels label {
    padding-top: 1px;
}
.channels input[type="text"] {
    width: 100%;
    border: 1px solid #7b9ebd;
    background: #fff;
    padding-left: 2px;
}
.channel {
    -webkit-appearance: none;
    appearance: none;
    min-width: 0;
    height: 13px;
    margin-top: 6px;
    background: linear-gradient(90deg, var(--from), var(--to)) center 1px / calc(100% - 12px) 4px no-repeat, linear-gradient(#000, #000) center 0 / calc(100% - 10px) 6px no-repeat;
}
input.channel::-webkit-slider-thumb {
    margin-top: 7px;
}
.red {
    --from: #0ff;
    --to: #fff;
}
.green {
    --from: #00f;
    --to: #0ff;
}
.blue {
    --from: #0f0;
    --to: #0ff;
}
.spectrum {
    display: flex;
    height: 17px;
    border: 1px solid #000;
}
.ramp {
    flex: 1;
    background: linear-gradient(rgba(255, 255, 255, 0.7), transparent 45%, rgba(0, 0, 0, 0.8)), linear-gradient(90deg, #e02818, #f8ec10 17%, #10984c 33%, #08a0e0 50%, #282888 67%, #e0148c 83%, #e02028);
}
.ends {
    width: 8px;
    background: linear-gradient(#fff 50%, #000 50%);
}

/* lists */
.list-body {
    display: flex;
    justify-content: flex-end;
    margin-top: 2px;
    border-top: 1px solid #000;
}
.scrollbar {
    width: 14px;
    padding: 1px 1px 2px 0;
    display: flex;
    flex-direction: column;
    justify-content: space-between;
    background: #fff;
}
.scrollbar button {
    height: 15px;
    border: 1px solid #e3e0d2;
    border-radius: 2px;
    background: #f1efe6;
}
.icon-footer {
    justify-content: flex-end;
    gap: 14px;
}
.icon-footer button {
    opacity: 0.8;
}
.icon-footer .size-grip {
    margin-left: -9px;
}

/* layers */
.layer-row {
    display: flex;
    align-items: center;
    height: 24px;
    padding: 0 4px;
    color: #adaa9c;
    font-size: 10px;
}
.layer-row + .layer-row {
    border-top: 1px solid #adaa9c;
    box-shadow: inset 0 1px #fff;
}
.layer-row label {
    margin-left: auto;
    padding-right: 5px;
}
.layers .list-body {
    margin-top: 0;
}
.blend {
    -webkit-appearance: none;
    appearance: none;
    width: 102px;
    height: 17px;
    padding-left: 2px;
    border: 1px solid #c9c7ba;
    background: #fff url("data:image/svg+xml,%3Csvg xmlns='http://www.w3.org/2000/svg' width='16' height='15'%3E%3Cpath d='M0 0h16v15H0z' fill='%23efece0'/%3E%3Cpath d='M4 5l4 4 4-4' fill='none' stroke='%23bbb8a8' stroke-width='2'/%3E%3C/svg%3E") right center no-repeat;
    opacity: 1;
    color: #adaa9c;
}
.spin {
    display: flex;
    width: 48px;
    height: 17px;
    padding: 1px;
    border: 1px solid #c9c7ba;
}
.spin input {
    flex: 1;
    min-width: 0;
}
.spin button {
    width: 15px;
    display: flex;
    align-items: center;
    justify-content: center;
    border: 1px solid #dcd9cb;
    background: #f3f1e8;
}
.spin button::before {
    content: "";
    border: 3px solid transparent;
    border-left: 4px solid #bbb8a8;
    border-right: 0;
}
.locks {
    display: flex;
    align-items: center;
    gap: 6px;
    margin-left: 8px;
}

/* status bar */
.statusbar {
    flex: none;
    display: flex;
    align-items: stretch;
    height: 18px;
    background: #efebde;
    border-bottom: 1px solid #fff;
}
.doc-zoom {
    width: 48px;
    border: 1px solid #000;
}
.status-cell {
    display: flex;
    align-items: center;
    border-right: 1px solid #fff;
}
.doc {
    width: 25px;
    padding-left: 6px;
}
.info {
    width: 204px;
}
.status-arrow {
    width: 15px;
    display: flex;
    align-items: center;
    padding-left: 3px;
    border-right: 1px solid #fff;
}
.message {
    padding: 0 4px 0 3px;
    font-size: 10px;
}

/* task bar */
.taskbar {
    flex: none;
    display: flex;
    align-items: center;
    height: 34px;
    padding-top: 4px;
    background: linear-gradient(#2a6ae0, #4890f5 3px, #2a66e0 7px, #245edb 28px, #1c48b0);
    color: #fff;
}
.start {
    align-self: stretch;
    display: flex;
    align-items: center;
    gap: 4px;
    width: 97px;
    padding: 0 0 1px 10px;
    border-radius: 0 10px 10px 0;
    background: linear-gradient(#67b567, #389238 6px, #348f34 22px, #246c24);
    box-shadow: inset -3px 0 5px #1f601f;
    font-family: "Liberation Sans", sans-serif;
    font-size: 18px;
    font-style: italic;
    font-weight: bold;
    text-shadow: 1px 1px 2px #1b4a1b;
}
.quick {
    display: flex;
    align-items: center;
    gap: 7px;
    padding: 0 21px 0 8px;
}
.tasks {
    flex: 1;
    min-width: 0;
    display: flex;
    gap: 2px;
    padding: 0 14px 0 6px;
}
.tasks button {
    flex: 1 1 0;
    min-width: 0;
    display: flex;
    align-items: center;
    gap: 4px;
    height: 25px;
    padding: 0 4px 0 9px;
    border-radius: 3px;
    background: #3c81f3;
    box-shadow: inset 1px 1px #66a0fa, inset -1px -1px #2a60cc;
    white-space: nowrap;
}
.tasks .current {
    background: #1e52b7;
    box-shadow: inset 1px 1px 2px #12389a;
}
.tasks b {
    color: #ffc35c;
}
.caret {
    margin-left: auto;
}
.tray {
    align-self: stretch;
    display: flex;
    align-items: center;
    width: 218px;
    padding-right: 12px;
    background: linear-gradient(#35b4f5, #1290e8 5px, #1198ee 26px, #0d74c4);
    border-left: 1px solid #0c3f9c;
}
.tray-toggle {
    margin-left: -10px;
}
.tray-icons {
    display: flex;
    gap: 2px;
    margin-left: 2px;
}
.av {
    width: 16px;
    height: 16px;
    border-radius: 50%;
    background: #1010d8;
    font-weight: bold;
    text-align: center;
}
.tray time {
    margin-left: auto;
}
```
